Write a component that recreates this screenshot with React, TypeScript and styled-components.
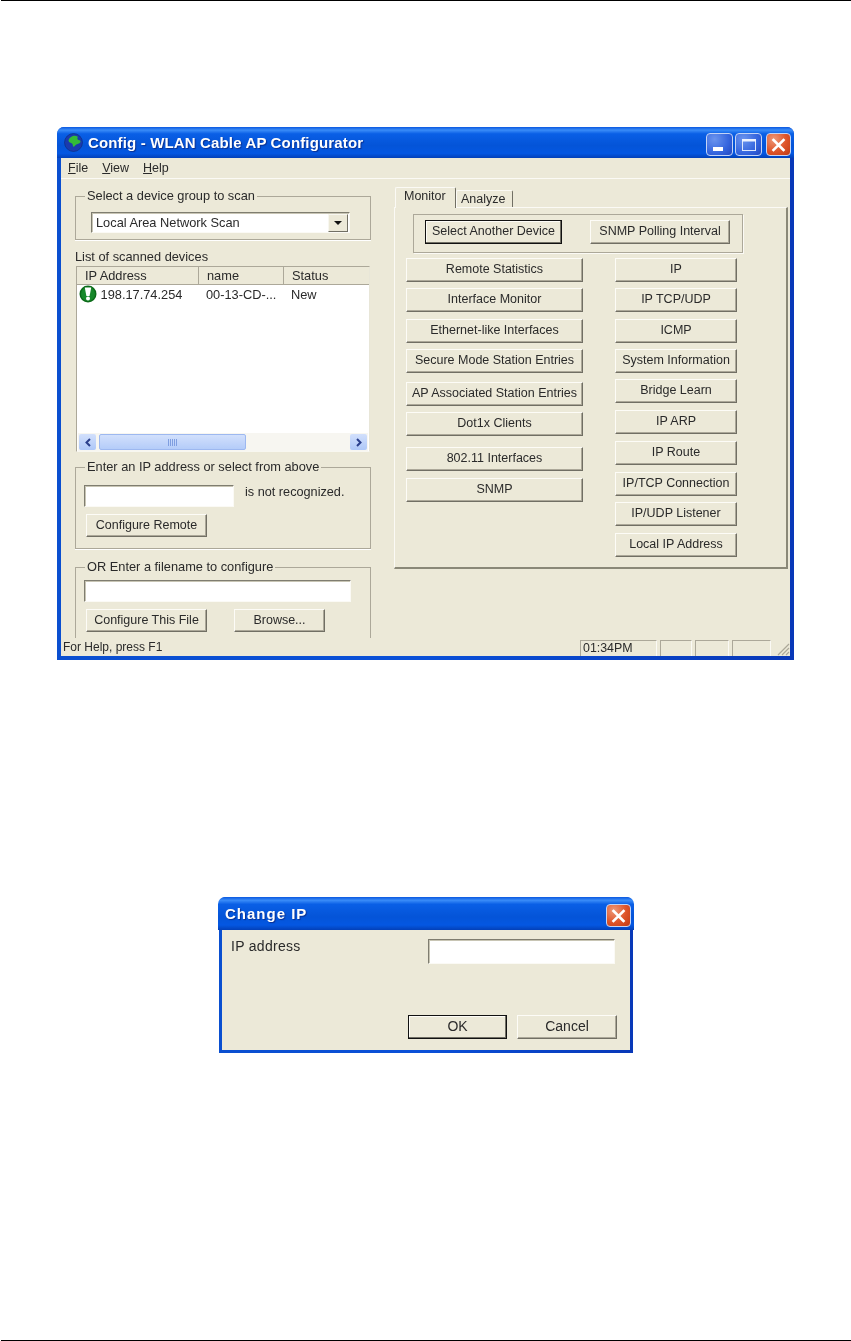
import React from "react";
import styled, { createGlobalStyle } from "styled-components";

const GlobalStyle = createGlobalStyle`
  html, body {
    margin: 0;
    padding: 0;
    background: #fff;
  }
  body {
    font-family: "Liberation Sans", Arial, sans-serif;
    font-size: 12.5px;
    color: #2a2a2a;
  }
`;

const Page = styled.div`
  width: 851px;
  height: 1341px;
  box-sizing: border-box;
  overflow: hidden;
  display: flex;
  flex-direction: column;
`;

const Rule = styled.div`
  height: 1px;
  margin-left: 1px;
  background: #000;
  flex: none;
`;

const Content = styled.div`
  flex: 1;
  padding: 126px 0 0 57px;
`;

const XpWindow = styled.div`
  width: 737px;
  height: 533px;
  box-sizing: border-box;
  background: linear-gradient(90deg, #0a4fd0, #0a50d8 50%, #0838b8);
  border-radius: 7px 7px 0 0;
  padding: 0 4px 4px;
  display: flex;
  flex-direction: column;
  filter: blur(0.45px);
`;

const Dialog = styled(XpWindow)`
  width: 414px;
  height: 156px;
  margin: 237px 0 0 162px;
  padding: 0 3px 3px;
`;

const TitleBar = styled.div<{ $h: number }>`
  height: ${(p) => p.$h}px;
  flex: none;
  margin: 0 -4px;
  padding: 0 3px 0 7px;
  border-radius: 7px 7px 0 0;
  background: linear-gradient(180deg, #0a58e0 0%, #3a8cf8 10%, #0a5fe6 22%, #0454d8 60%, #0457e2 85%, #0340b8 100%);
  display: flex;
  align-items: center;
  gap: 5px;
`;

const TitleText = styled.div<{ $size: number; $ls: number }>`
  flex: 1;
  color: #fff;
  font-size: ${(p) => p.$size}px;
  font-weight: 700;
  letter-spacing: ${(p) => p.$ls}px;
  white-space: nowrap;
  text-shadow: 1px 1px 1px #0a2f90;
`;

const CapButton = styled.div<{ $close?: boolean }>`
  width: ${(p) => (p.$close ? 25 : 27)}px;
  height: 23px;
  margin: 4px 0 0 ${(p) => (p.$close ? -1 : -3)}px;
  box-sizing: border-box;
  border: 1px solid #c4d4f6;
  border-radius: 4px;
  background: ${(p) =>
    p.$close
      ? "radial-gradient(circle at 30% 25%, #ee9878, #de5429 55%, #c03a14)"
      : "radial-gradient(circle at 30% 25%, #6a94ee, #3565de 60%, #2347c0)"};
  display: flex;
  align-items: center;
  justify-content: center;
`;

const MenuBar = styled.div`
  height: 20px;
  flex: none;
  background: #ece9d8;
  border-bottom: 1px solid #fbfaf5;
  display: flex;
  align-items: center;
  gap: 14px;
  padding-left: 7px;
`;

const MenuItem = styled.span`
  &::first-letter {
    text-decoration: underline;
  }
`;

const Client = styled.div`
  flex: 1;
  background: #ece9d8;
  display: flex;
  flex-direction: column;
  min-height: 0;
`;

const Body = styled.div`
  height: 459px;
  flex: none;
  display: flex;
  overflow: hidden;
`;

const LeftPane = styled.div`
  width: 296px;
  margin-left: 14px;
  padding-top: 10px;
`;

const Group = styled.fieldset<{ $h: number; $open?: boolean }>`
  height: ${(p) => p.$h}px;
  box-sizing: border-box;
  margin: 0;
  padding: 0 0 0 8px;
  min-width: 0;
  border: 1px solid #aca899;
  ${(p) => (p.$open ? "border-bottom: none;" : "")}
  box-shadow: 0 1px 0 #fff;
  color: #2a2a2a;
`;

const Legend = styled.legend`
  margin-left: 1px;
  padding: 0 2px;
  font-size: 12.8px;
  line-height: 14px;
`;

const Sunken = styled.div<{ $w: number }>`
  width: ${(p) => p.$w}px;
  height: 22px;
  box-sizing: border-box;
  background: #fff;
  border-top: 1px solid #7f7d70;
  border-left: 1px solid #7f7d70;
  border-right: 1px solid #fbfaf5;
  border-bottom: 1px solid #fbfaf5;
  box-shadow: inset 1px 1px 0 #c8c5b4;
`;

const ComboBox = styled(Sunken)`
  height: 21px;
  margin: 9px 0 0 7px;
  display: flex;
  align-items: center;
  justify-content: space-between;
  padding: 0 1px 0 4px;
  font-size: 12.8px;
`;

const ComboArrow = styled.div`
  width: 20px;
  height: 18px;
  background: #ece9d8;
  border-top: 1px solid #f8f7f0;
  border-left: 1px solid #f8f7f0;
  border-right: 1px solid #716f64;
  border-bottom: 1px solid #716f64;
  box-sizing: border-box;
  display: flex;
  align-items: center;
  justify-content: center;
  &::after {
    content: "";
    border-top: 4px solid #111;
    border-left: 4px solid transparent;
    border-right: 4px solid transparent;
  }
`;

const ListCaption = styled.div`
  margin-top: 10px;
  line-height: 14px;
  font-size: 12.8px;
`;

const ListBox = styled.div`
  margin: 2px 0 0 1px;
  width: 294px;
  height: 186px;
  box-sizing: border-box;
  background: #fff;
  border: 1px solid #aca899;
  border-right-color: #e8e6d8;
  border-bottom-color: #f8f7f0;
  display: flex;
  flex-direction: column;
  font-size: 12.8px;
`;

const ListHeader = styled.div`
  height: 17px;
  flex: none;
  display: flex;
  background: #ece9d8;
  border-bottom: 1px solid #aca899;
`;

const HeaderCell = styled.div<{ $w: number }>`
  width: ${(p) => p.$w}px;
  box-sizing: border-box;
  padding-left: 8px;
  border-right: 1px solid #aca899;
  line-height: 17px;
  &:last-child {
    border-right: none;
  }
`;

const ListRow = styled.div`
  height: 18px;
  display: flex;
  align-items: center;
  padding-left: 2px;
`;

const RowCell = styled.div<{ $w: number }>`
  width: ${(p) => p.$w}px;
  flex: none;
  white-space: nowrap;
`;

const ListFill = styled.div`
  flex: 1;
`;

const ScrollBar = styled.div`
  height: 18px;
  flex: none;
  margin: 0 1px;
  background: #f7f6f1;
  display: flex;
  align-items: center;
  padding: 0 1px;
`;

const ScrollArrow = styled.div`
  width: 17px;
  height: 16px;
  border-radius: 2px;
  background: linear-gradient(180deg, #d2e0fc, #aec8f8);
  display: flex;
  align-items: center;
  justify-content: center;
`;

const ScrollThumb = styled.div`
  width: 147px;
  height: 16px;
  margin-left: 3px;
  box-sizing: border-box;
  border: 1px solid #9db8f0;
  border-radius: 2px;
  background: linear-gradient(180deg, #d2e0fc, #b4ccf9);
  display: flex;
  align-items: center;
  justify-content: center;
`;

const ThumbGrip = styled.div`
  width: 9px;
  height: 7px;
  background: repeating-linear-gradient(90deg, #7f9ee0 0 1px, transparent 1px 2px);
`;

const ScrollTrack = styled.div`
  flex: 1;
`;

const IpRow = styled.div`
  display: flex;
  align-items: flex-start;
  margin-top: 11px;
  gap: 11px;
  font-size: 12.7px;
  line-height: 14px;
`;

const PlainInput = styled(Sunken)``;

const FileInput = styled(Sunken)`
  margin-top: 6px;
`;

const GroupWrap = styled.div<{ $mt: number }>`
  margin-top: ${(p) => p.$mt}px;
`;

const Btn = styled.div<{ $w: number; $h?: number; $mt?: number; $default?: boolean }>`
  width: ${(p) => p.$w}px;
  height: ${(p) => p.$h ?? 23}px;
  margin-top: ${(p) => p.$mt ?? 0}px;
  padding-bottom: 2px;
  flex: none;
  box-sizing: border-box;
  background: #ece9d8;
  border-top: 1px solid ${(p) => (p.$default ? "#111" : "#fdfcf7")};
  border-left: 1px solid ${(p) => (p.$default ? "#111" : "#fdfcf7")};
  border-right: 1px solid ${(p) => (p.$default ? "#111" : "#716f64")};
  border-bottom: 1px solid ${(p) => (p.$default ? "#111" : "#716f64")};
  box-shadow: ${(p) =>
    p.$default ? "inset -1px -1px 0 #716f64, inset 1px 1px 0 #fdfcf7" : "inset -1px -1px 0 #aca899"};
  display: flex;
  align-items: center;
  justify-content: center;
  white-space: nowrap;
`;

const ButtonRow = styled.div<{ $gap: number; $mt: number }>`
  display: flex;
  gap: ${(p) => p.$gap}px;
  margin-top: ${(p) => p.$mt}px;
  margin-left: 2px;
`;

const RightPane = styled.div`
  width: 394px;
  margin-left: 23px;
  padding-top: 8px;
`;

const TabStrip = styled.div`
  height: 20px;
  display: flex;
  align-items: flex-end;
  padding-left: 1px;
  position: relative;
  z-index: 1;
`;

const Tab = styled.div<{ $active?: boolean; $w: number }>`
  width: ${(p) => p.$w}px;
  height: ${(p) => (p.$active ? 21 : 17)}px;
  margin-bottom: ${(p) => (p.$active ? -1 : 0)}px;
  box-sizing: border-box;
  background: #ece9d8;
  border-top: 1px solid #fbfaf5;
  border-left: 1px solid #fbfaf5;
  border-right: 1px solid #716f64;
  border-radius: 2px 2px 0 0;
  padding: ${(p) => (p.$active ? "1px 0 0 8px" : "1px 0 0 4px")};
  line-height: 14px;
`;

const TabPanel = styled.div`
  height: 362px;
  box-sizing: border-box;
  border-top: 1px solid #fbfaf5;
  border-left: 1px solid #fbfaf5;
  border-right: 2px solid #8a8878;
  border-bottom: 2px solid #8a8878;
  padding: 6px 0 0 11px;
`;

const PollGroup = styled.div`
  width: 330px;
  height: 39px;
  margin-left: 7px;
  box-sizing: border-box;
  border: 1px solid #aca899;
  box-shadow: 1px 1px 0 #fbfaf5;
  display: flex;
  align-items: flex-start;
  padding: 5px 0 0 11px;
  gap: 28px;
`;

const Columns = styled.div`
  display: flex;
  gap: 32px;
  margin-top: 5px;
`;

const ButtonColumn = styled.div`
  display: flex;
  flex-direction: column;
`;

const DialogBody = styled.div`
  flex: 1;
  background: #ece9d8;
  padding: 8px 0 0 9px;
  display: flex;
  flex-direction: column;
  font-size: 14px;
`;

const FieldRow = styled.div`
  display: flex;
  justify-content: space-between;
  padding-right: 15px;
  letter-spacing: 0.3px;
`;

const DialogInput = styled(Sunken)`
  height: 25px;
  margin-top: 1px;
`;

const DialogActions = styled.div`
  display: flex;
  gap: 10px;
  margin: 51px 0 0 177px;
`;

const StatusBar = styled.div`
  flex: 1;
  display: flex;
  align-items: flex-end;
  padding: 0 0 0 2px;
  gap: 3px;
  position: relative;
`;

const StatusText = styled.div`
  width: 514px;
  line-height: 17px;
  font-size: 12px;
`;

const StatusPane = styled.div<{ $w: number }>`
  width: ${(p) => p.$w}px;
  height: 16px;
  box-sizing: border-box;
  border-top: 1px solid #aca899;
  border-left: 1px solid #aca899;
  border-right: 1px solid #fbfaf5;
  line-height: 15px;
  padding-left: 2px;
  font-size: 12.4px;
`;

const Grip = styled.svg`
  position: absolute;
  right: 0;
  bottom: 0;
`;

const Globe = () => (
  <svg width="19" height="19" viewBox="0 0 19 19">
    <circle cx="9.5" cy="9.5" r="9" fill="#1a3aae" stroke="#0c2a78" strokeWidth="0.6" />
    <path d="M7 4c2-1.5 5-1.5 6.5-.5.8 1-.8 2 .2 3s2.5.2 2.8 1.8-1.8 2.6-3.5 3-2.2 2.7-3.4 2.4-.4-2.4-1.6-3.2-3-.8-3.4-2.4S5.700 5 7 4z" fill="#33bb38" />
  </svg>
);

const AlertIcon = () => (
  <svg width="18" height="18" viewBox="0 0 18 18">
    <circle cx="9" cy="9" r="8.5" fill="#0b6a18" />
    <circle cx="9" cy="9" r="7" fill="#16882a" />
    <path d="M5.8 2.5h6.4l-1.6 8.5H7.4z" fill="#fff" />
    <circle cx="9" cy="13.6" r="2" fill="#fff" />
  </svg>
);

const CloseGlyph = () => (
  <svg width="15" height="14" viewBox="0 0 15 14">
    <path d="M2.5 2l10 10M12.5 2l-10 10" stroke="#fff" strokeWidth="2.6" strokeLinecap="square" />
  </svg>
);

const MinGlyph = () => (
  <svg width="16" height="14" viewBox="0 0 16 14">
    <rect x="1" y="9" width="10" height="4" fill="#fff" />
  </svg>
);

const MaxGlyph = () => (
  <svg width="16" height="14" viewBox="0 0 16 14">
    <rect x="1.5" y="1.5" width="13" height="11" fill="none" stroke="#dfe8fb" />
    <rect x="1" y="1" width="14" height="2.5" fill="#eef3ff" />
  </svg>
);

const Chevron = ({ right }: { right?: boolean }) => (
  <svg width="8" height="9" viewBox="0 0 8 9">
    <path d={right ? "M2 1l3.5 3.5L2 8" : "M6 1L2.5 4.5 6 8"} fill="none" stroke="#2a3f8c" strokeWidth="2" />
  </svg>
);

const leftButtons = [
  { label: "Remote Statistics", mt: 0 },
  { label: "Interface Monitor", mt: 6 },
  { label: "Ethernet-like Interfaces", mt: 7 },
  { label: "Secure Mode Station Entries", mt: 6 },
  { label: "AP Associated Station Entries", mt: 9 },
  { label: "Dot1x Clients", mt: 6 },
  { label: "802.11 Interfaces", mt: 11 },
  { label: "SNMP", mt: 7 },
];

const rightButtons = [
  { label: "IP", mt: 0 },
  { label: "IP TCP/UDP", mt: 6 },
  { label: "ICMP", mt: 7 },
  { label: "System Information", mt: 6 },
  { label: "Bridge Learn", mt: 6 },
  { label: "IP ARP", mt: 7 },
  { label: "IP Route", mt: 7 },
  { label: "IP/TCP Connection", mt: 7 },
  { label: "IP/UDP Listener", mt: 6 },
  { label: "Local IP Address", mt: 7 },
];

export default function App() {
  return (
    <Page>
      <GlobalStyle />
      <Rule />
      <Content>
        <XpWindow>
          <TitleBar $h={31}>
            <Globe />
            <TitleText $size={15} $ls={0.15}>Config - WLAN Cable AP Configurator</TitleText>
            <CapButton><MinGlyph /></CapButton>
            <CapButton><MaxGlyph /></CapButton>
            <CapButton $close><CloseGlyph /></CapButton>
          </TitleBar>
          <MenuBar>
            <MenuItem>File</MenuItem>
            <MenuItem>View</MenuItem>
            <MenuItem>Help</MenuItem>
          </MenuBar>
          <Client>
            <Body>
              <LeftPane>
                <Group $h={51}>
                  <Legend>Select a device group to scan</Legend>
                  <ComboBox $w={259}>
                    Local Area Network Scan
                    <ComboArrow />
                  </ComboBox>
                </Group>
                <ListCaption>List of scanned devices</ListCaption>
                <ListBox>
                  <ListHeader>
                    <HeaderCell $w={122}>IP Address</HeaderCell>
                    <HeaderCell $w={85}>name</HeaderCell>
                    <HeaderCell $w={85}>Status</HeaderCell>
                  </ListHeader>
                  <ListRow>
                    <AlertIcon />
                    <RowCell $w={109}>&nbsp;198.17.74.254</RowCell>
                    <RowCell $w={85}>00-13-CD-...</RowCell>
                    <RowCell $w={60}>New</RowCell>
                  </ListRow>
                  <ListFill />
                  <ScrollBar>
                    <ScrollArrow><Chevron /></ScrollArrow>
                    <ScrollThumb><ThumbGrip /></ScrollThumb>
                    <ScrollTrack />
                    <ScrollArrow><Chevron right /></ScrollArrow>
                  </ScrollBar>
                </ListBox>
                <GroupWrap $mt={8}>
                  <Group $h={89}>
                    <Legend>Enter an IP address or select from above</Legend>
                    <IpRow>
                      <PlainInput $w={150} />
                      is not recognized.
                    </IpRow>
                    <ButtonRow $gap={27} $mt={7}>
                      <Btn $w={121}>Configure Remote</Btn>
                    </ButtonRow>
                  </Group>
                </GroupWrap>
                <GroupWrap $mt={11}>
                  <Group $h={80} $open>
                    <Legend>OR Enter a filename to configure</Legend>
                    <FileInput $w={267} />
                    <ButtonRow $gap={27} $mt={7}>
                      <Btn $w={121}>Configure This File</Btn>
                      <Btn $w={91}>Browse...</Btn>
                    </ButtonRow>
                  </Group>
                </GroupWrap>
              </LeftPane>
              <RightPane>
                <TabStrip>
                  <Tab $active $w={61}>Monitor</Tab>
                  <Tab $w={57}>Analyze</Tab>
                </TabStrip>
                <TabPanel>
                  <PollGroup>
                    <Btn $w={137} $h={24} $default>Select Another Device</Btn>
                    <Btn $w={140} $h={24}>SNMP Polling Interval</Btn>
                  </PollGroup>
                  <Columns>
                    <ButtonColumn>
                      {leftButtons.map((b) => (
                        <Btn key={b.label} $w={177} $h={24} $mt={b.mt}>{b.label}</Btn>
                      ))}
                    </ButtonColumn>
                    <ButtonColumn>
                      {rightButtons.map((b) => (
                        <Btn key={b.label} $w={122} $h={24} $mt={b.mt}>{b.label}</Btn>
                      ))}
                    </ButtonColumn>
                  </Columns>
                </TabPanel>
              </RightPane>
            </Body>
            <StatusBar>
              <StatusText>For Help, press F1</StatusText>
              <StatusPane $w={77}>01:34PM</StatusPane>
              <StatusPane $w={32} />
              <StatusPane $w={34} />
              <StatusPane $w={39} />
              <Grip width="14" height="14" viewBox="0 0 14 14">
                <path d="M13 2L2 13M13 6L6 13M13 10L10 13" stroke="#aca899" strokeWidth="1.2" />
              </Grip>
            </StatusBar>
          </Client>
        </XpWindow>

        <Dialog>
          <TitleBar $h={33}>
            <TitleText $size={15} $ls={1}>Change IP</TitleText>
            <CapButton $close><CloseGlyph /></CapButton>
          </TitleBar>
          <DialogBody>
            <FieldRow>
              IP address
              <DialogInput $w={187} />
            </FieldRow>
            <DialogActions>
              <Btn $w={99} $h={24} $default>OK</Btn>
              <Btn $w={100} $h={24}>Cancel</Btn>
            </DialogActions>
          </DialogBody>
        </Dialog>
      </Content>
      <Rule />
    </Page>
  );
}
